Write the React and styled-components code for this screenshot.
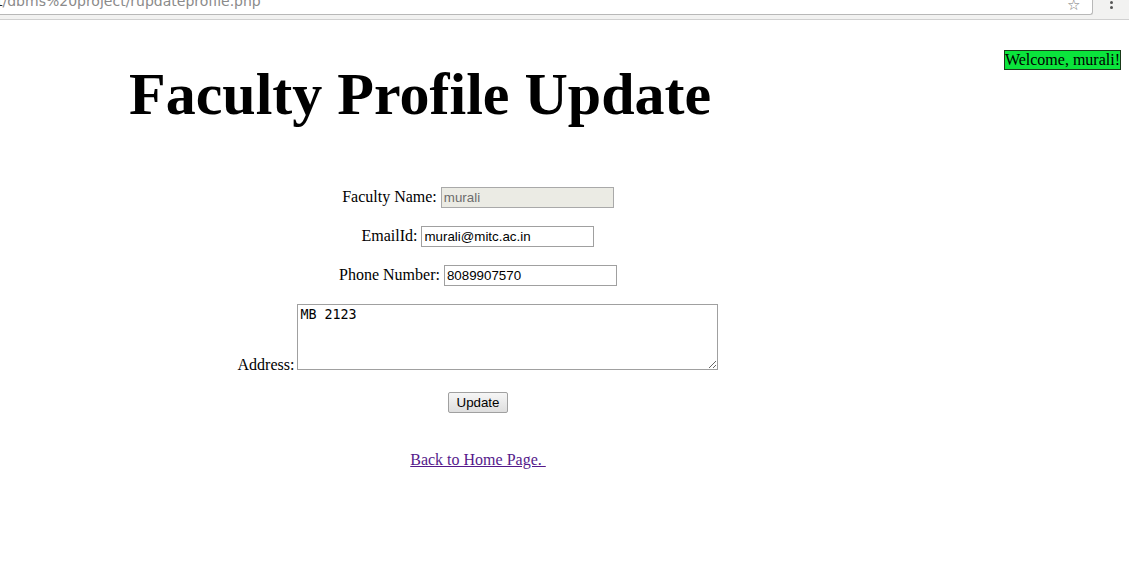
import React from 'react';
import styled, { createGlobalStyle } from 'styled-components';

const GlobalStyle = createGlobalStyle`
  html, body {
    margin: 0;
    padding: 0;
    background: #fff;
  }
  body {
    font-family: "Liberation Serif", "Times New Roman", serif;
    font-size: 16px;
    color: #000;
  }
`;

const Chrome = styled.div`
  height: 19px;
  background: #f2f2f1;
  border-bottom: 1px solid #d0d0d0;
  display: flex;
  align-items: flex-start;
`;
const UrlBox = styled.div`
  flex: 1;
  height: 14px;
  background: #fff;
  border-bottom: 1px solid #b8b8b8;
  border-right: 1px solid #b8b8b8;
  border-bottom-right-radius: 3px;
  overflow: hidden;
  display: flex;
  align-items: flex-end;
  padding-right: 12px;
`;
const UrlText = styled.div`
  flex: 1;
  font-family: "DejaVu Sans", sans-serif;
  font-size: 14px;
  line-height: 14px;
  margin-left: -3px;
  margin-bottom: 6px;
  color: #8a8a8a;
  white-space: nowrap;
  b {
    font-weight: normal;
    color: #222;
  }
`;
const Star = styled.span`
  font-size: 15px;
  line-height: 14px;
  color: #777;
  margin-bottom: 2px;
`;
const Kebab = styled.div`
  width: 36px;
  display: flex;
  flex-direction: column;
  align-items: center;
  gap: 2px;
  padding-top: 1px;
  span {
    width: 3px;
    height: 3px;
    border-radius: 50%;
    background: #555;
  }
`;

const Page = styled.div`
  padding: 0 8px;
`;
const Welcome = styled.span`
  float: right;
  margin-top: 30px;
  background: #0be43c;
  border: 1px solid #1a3a1a;
  padding: 0;
  line-height: 18px;
`;
const Title = styled.h1`
  margin: 0;
  padding: 39px 0 0 121px;
  font-size: 60px;
  line-height: 70px;
  font-weight: bold;
`;
const Form = styled.form`
  width: 940px;
  margin-top: 56px;
  text-align: center;
`;
const Row = styled.p`
  margin: 0 0 ${({ $tight }) => ($tight ? '14px' : '16px')};
  line-height: 23px;
`;
const Field = styled.input`
  font-family: "Liberation Sans", Arial, sans-serif;
  font-size: 13.33px;
  width: 173px;
  height: 21px;
  box-sizing: border-box;
  padding: 1px 2px;
  border: 1px solid ${({ disabled }) => (disabled ? '#a9a9a9' : '#a0a0a0')};
  background: ${({ disabled }) => (disabled ? '#ebebe4' : '#fff')};
  color: ${({ disabled }) => (disabled ? '#6d6d6d' : '#000')};
  margin-left: 4px;
  vertical-align: baseline;
`;
const Area = styled.textarea`
  font-family: "DejaVu Sans Mono", monospace;
  font-size: 13.33px;
  width: 421px;
  height: 66px;
  box-sizing: border-box;
  padding: 2px;
  border: 1px solid #a0a0a0;
  margin: 2px 0 0 3px;
  vertical-align: baseline;
  resize: both;
`;
const Button = styled.button`
  font-family: "Liberation Sans", Arial, sans-serif;
  font-size: 13.33px;
  height: 21px;
  padding: 1px 8px;
  border: 1px solid #a0a0a0;
  border-radius: 2px;
  background: linear-gradient(#f6f6f6, #dedede);
  color: #000;
`;
const HomeLink = styled.a`
  display: inline-block;
  margin-top: 22px;
  color: #551a8b;
  text-decoration: underline;
`;

export default function App() {
  return (
    <>
      <GlobalStyle />
      <Chrome>
        <UrlBox>
          <UrlText>
            <b>t</b>/dbms%20project/rupdateprofile.php
          </UrlText>
          <Star>☆</Star>
        </UrlBox>
        <Kebab>
          <span />
          <span />
        </Kebab>
      </Chrome>
      <Page>
        <Welcome>Welcome, murali!</Welcome>
        <Title>Faculty Profile Update</Title>
        <Form onSubmit={(e) => e.preventDefault()}>
          <Row>
            Faculty Name:<Field type="text" value="murali" disabled readOnly />
          </Row>
          <Row>
            EmailId:<Field type="text" defaultValue="murali@mitc.ac.in" />
          </Row>
          <Row>
            Phone Number:<Field type="text" defaultValue="8089907570" />
          </Row>
          <Row $tight>
            Address:<Area defaultValue="MB 2123" />
          </Row>
          <Row>
            <Button type="submit">Update</Button>
          </Row>
          <HomeLink href="#">Back to Home Page.&nbsp;</HomeLink>
        </Form>
      </Page>
    </>
  );
}
